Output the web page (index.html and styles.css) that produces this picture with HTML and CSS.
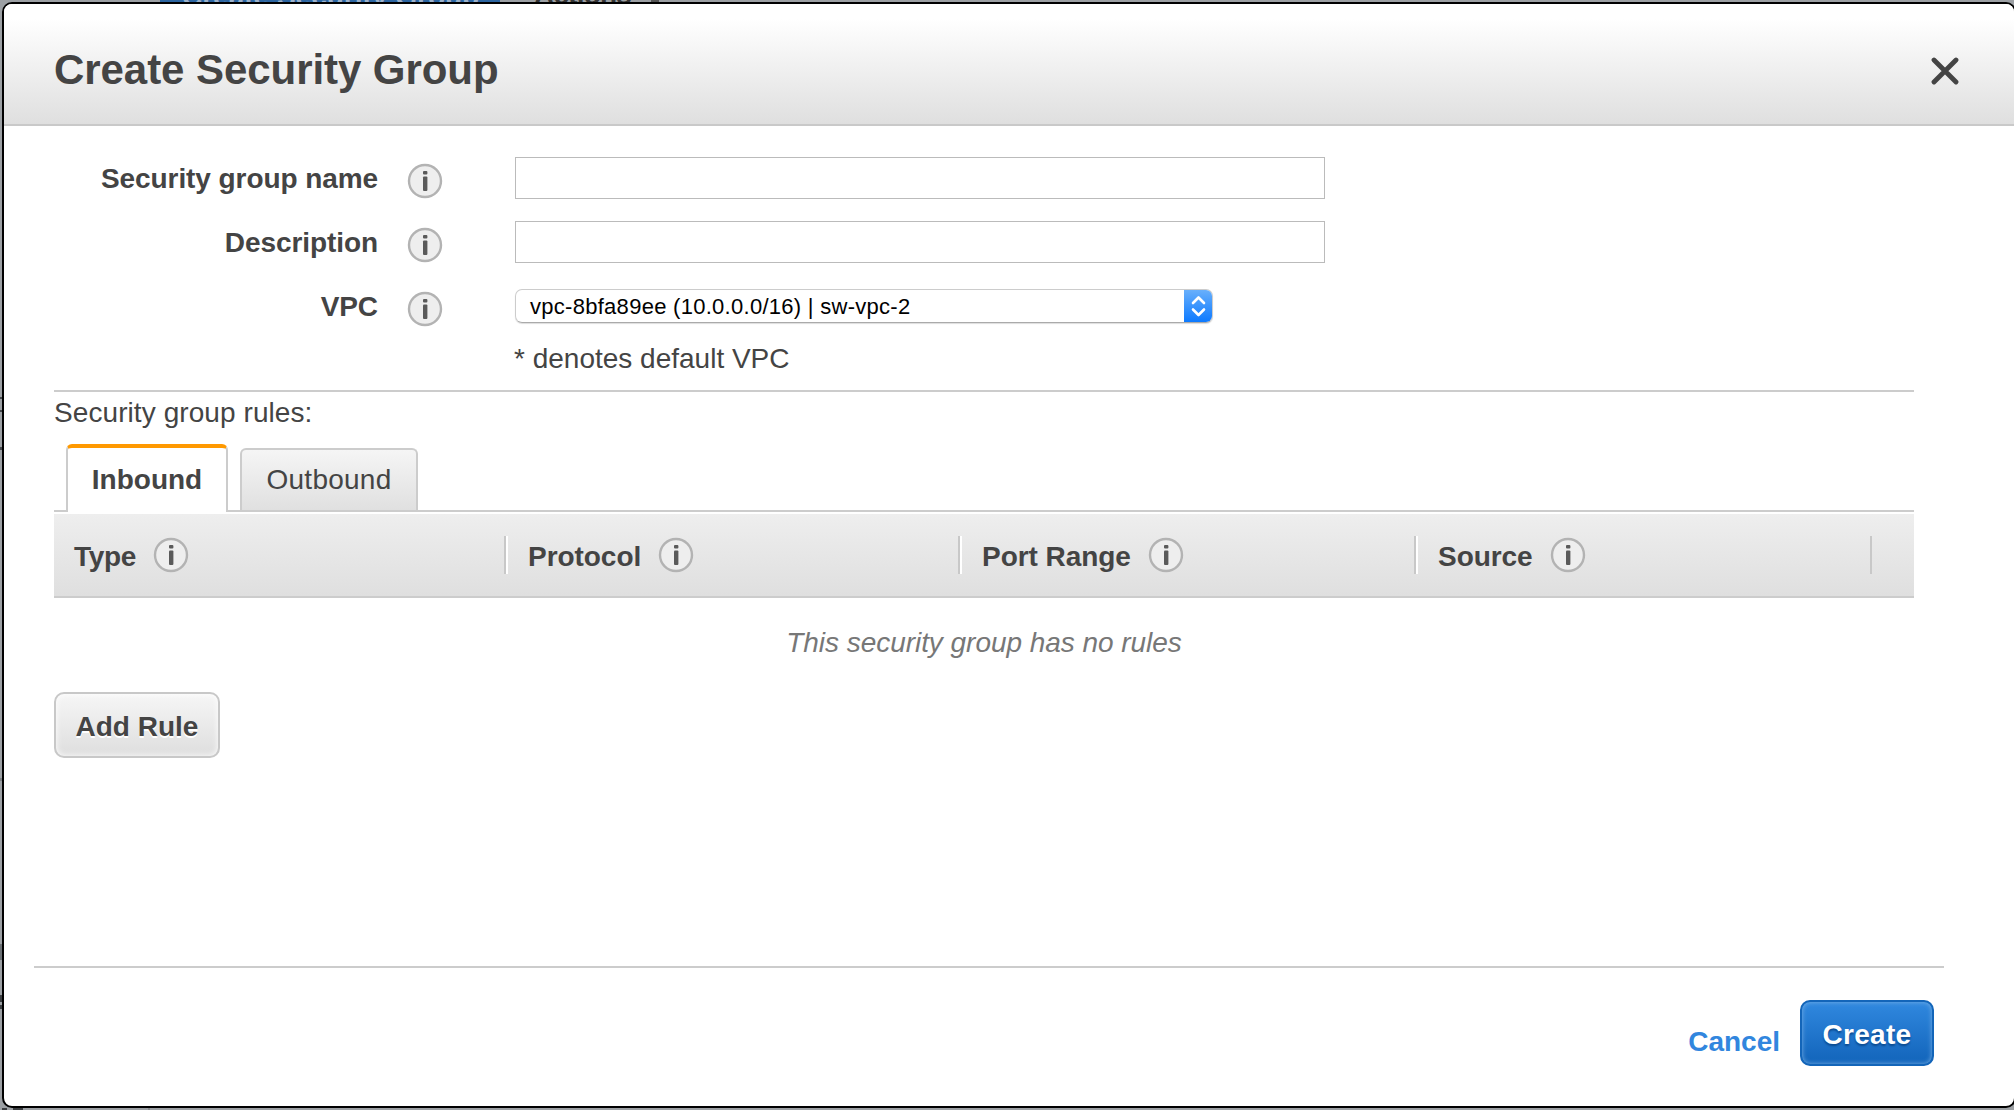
FILE: index.html
```html
<!DOCTYPE html>
<html lang="en">
<head>
<meta charset="utf-8">
<title>Create Security Group</title>
<link rel="stylesheet" href="styles.css">
</head>
<body>
<svg class="defs" width="0" height="0" aria-hidden="true">
  <symbol id="info" viewBox="0 0 36 36">
    <circle cx="18" cy="18" r="16" fill="#eee" stroke="#b3b3b3" stroke-width="2.4"/>
    <rect x="16" y="8" width="4.4" height="3.6" rx="1" fill="#5a5a5a"/>
    <rect x="16" y="13.4" width="4.4" height="14.6" rx="1" fill="#5a5a5a"/>
  </symbol>
</svg>
<div class="backdrop" aria-hidden="true">
  <div class="backdrop-gap"></div>
  <div class="backdrop-create"><span class="backdrop-label">Create Security Group</span></div>
  <div class="backdrop-actions"><span class="backdrop-label">Actions</span></div>
  <div class="backdrop-caret"></div>
</div>
<main class="modal">
  <header class="modal-header">
    <h1 class="title">Create Security Group</h1>
    <svg class="close" width="28" height="28" viewBox="0 0 28 28"><path d="M3 3L25 25M25 3L3 25" stroke="#444" stroke-width="4.8" stroke-linecap="round"/></svg>
  </header>
  <form class="form">
    <div class="row">
      <label class="label" for="group-name">Security group name</label>
      <svg class="info"><use href="#info"/></svg>
      <input class="field" id="group-name" type="text">
    </div>
    <div class="row">
      <label class="label" for="description">Description</label>
      <svg class="info"><use href="#info"/></svg>
      <input class="field" id="description" type="text">
    </div>
    <div class="row">
      <label class="label">VPC</label>
      <svg class="info"><use href="#info"/></svg>
      <div class="select">
        <span class="select-text">vpc-8bfa89ee (10.0.0.0/16) | sw-vpc-2</span>
        <span class="select-arrows"><svg width="29" height="34" viewBox="0 0 29 34"><path d="M9 14L14.5 8.5L20 14M9 20.5L14.5 26L20 20.5" fill="none" stroke="#fff" stroke-width="2.6" stroke-linecap="round" stroke-linejoin="round"/></svg></span>
      </div>
    </div>
    <p class="hint">* denotes default VPC</p>
  </form>
  <section class="rules">
    <p class="rules-title">Security group rules:</p>
    <div class="tabs">
      <div class="tab tab-active">Inbound</div>
      <div class="tab tab-idle">Outbound</div>
    </div>
    <div class="thead">
      <div class="th th-type"><span class="th-text">Type</span><svg class="info"><use href="#info"/></svg></div>
      <div class="th th-protocol"><span class="th-text">Protocol</span><svg class="info"><use href="#info"/></svg></div>
      <div class="th th-port"><span class="th-text">Port Range</span><svg class="info"><use href="#info"/></svg></div>
      <div class="th th-source"><span class="th-text">Source</span><svg class="info"><use href="#info"/></svg></div>
    </div>
    <p class="empty">This security group has no rules</p>
    <button class="btn btn-add" type="button">Add Rule</button>
  </section>
  <footer class="footer">
    <a class="cancel">Cancel</a>
    <button class="btn btn-create" type="button">Create</button>
  </footer>
</main>
</body>
</html>
```
FILE: styles.css
```css
* { box-sizing: border-box; }
body {
  margin: 0;
  width: 2014px;
  height: 1110px;
  overflow: hidden;
  position: relative;
  /* slivers of the dimmed page left of and below the dialog */
  background:
    linear-gradient(#45484c, #45484c) 0 397px / 2px 2px no-repeat,
    linear-gradient(#45484c, #45484c) 0 410px / 2px 2px no-repeat,
    linear-gradient(#45484c, #45484c) 0 447px / 2px 3px no-repeat,
    linear-gradient(#7c8084, #7c8084) 0 778px / 2px 3px no-repeat,
    linear-gradient(#6b7074, #6b7074) 0 944px / 2px 16px no-repeat,
    linear-gradient(#3c3f42, #3c3f42) 0 995px / 2px 7px no-repeat,
    linear-gradient(#3c3f42, #3c3f42) 0 1005px / 2px 4px no-repeat,
    linear-gradient(#3c3f42, #3c3f42) 2px 1108px / 5px 2px no-repeat,
    linear-gradient(#3c3f42, #3c3f42) 13px 1108px / 10px 2px no-repeat,
    linear-gradient(#85898d, #85898d) 148px 1108px / 2px 2px no-repeat,
    #9ca0a4;
  color: #444;
  font: 28px/32px "Liberation Sans", Arial, sans-serif;
}
p, h1 { margin: 0; }
.defs { position: absolute; }
.backdrop { display: flex; height: 2px; overflow: hidden; }
.backdrop-gap { width: 160px; }
.backdrop-create { width: 340px; height: 2px; background: #2d65a0; color: #9db3cc; padding-left: 22px; }
.backdrop-actions { margin-left: 34px; color: #333; }
.backdrop-label { display: block; margin-top: -21px; font-weight: bold; white-space: nowrap; }
.backdrop-create .backdrop-label { margin-top: -19px; }
.backdrop-actions .backdrop-label { letter-spacing: -0.8px; }
.backdrop-caret { width: 8px; height: 2px; margin-left: 20px; background: #555; }
.modal {
  display: flex;
  flex-direction: column;
  position: relative;
  width: 2014px;
  height: 1106px;
  margin-left: 2px;
  border: 2px solid #000;
  border-radius: 10px;
  background: #fff;
  overflow: hidden;
}
.modal-header {
  display: flex;
  align-items: center;
  justify-content: space-between;
  height: 122px;
  flex: none;
  padding: 0 55px 0 50px;
  border-bottom: 2px solid #c9c9c9;
  background: linear-gradient(#fff 12%, #dfdfdf);
}
.title { padding-top: 12px; font-size: 42px; line-height: 48px; letter-spacing: -0.06px; }
.close { margin-top: 13px; }
.form { padding: 31px 0 0; }
.row { display: flex; height: 64px; }
.label { width: 374px; font-weight: bold; text-align: right; line-height: 44px; letter-spacing: -0.08px; }
.info { width: 36px; height: 36px; flex: none; }
.row .info { margin: 6px 72px 0 29px; }
.field { width: 810px; height: 42px; border: 1px solid #bbb; background: #fff; padding: 0; }
.select {
  display: flex;
  width: 698px;
  height: 34px;
  margin-top: 4px;
  border: 1px solid #ccc;
  border-bottom-color: #aaa;
  border-radius: 7px;
  overflow: hidden;
  box-shadow: 0 1px 1px #ddd;
}
.select-text { flex: 1; padding-left: 14px; font-size: 22px; line-height: 34px; letter-spacing: 0.28px; color: #000; }
.select-arrows { width: 29px; margin: -1px -1px -1px 0; background: linear-gradient(#6bb1fb, #0a78ff); }
.select-arrows svg { display: block; }
.hint { padding-left: 510px; height: 41px; line-height: 20px; }
.rules { width: 1860px; margin-left: 50px; border-top: 2px solid #ccc; }
.rules-title { height: 52px; line-height: 42px; letter-spacing: 0.08px; }
.tabs { display: flex; align-items: flex-end; height: 68px; padding-left: 12px; gap: 12px; border-bottom: 2px solid #ccc; }
.tab { display: flex; justify-content: center; border: 2px solid #ccc; border-bottom: 0; border-radius: 6px 6px 0 0; }
.tab-active { width: 162px; height: 68px; margin-bottom: -2px; border-top: 4px solid #ff9900; background: #fff; font-weight: bold; padding-top: 16px; }
.tab-idle { width: 178px; height: 62px; background: linear-gradient(#f5f5f5, #e0e0e0); padding-top: 14px; letter-spacing: 0.25px; }
.thead { display: flex; align-items: center; height: 84px; margin-top: 2px; border-bottom: 2px solid #ccc; background: linear-gradient(#eee, #dfdfdf); font-weight: bold; }
.th { display: flex; align-items: center; gap: 17px; height: 38px; padding-left: 22px; border-right: 2px solid #c8c8c8; box-shadow: 2px 0 0 #fff; }
.th-text { padding-top: 3px; letter-spacing: -0.05px; }
.th-type { width: 452px; padding-left: 20px; }
.th-type .th-text { letter-spacing: -0.3px; }
.th-protocol { width: 454px; }
.th-port { width: 456px; }
.th-source { width: 456px; box-shadow: none; }
.empty { height: 94px; padding-top: 29px; text-align: center; font-style: italic; letter-spacing: -0.04px; color: #777; }
.btn { display: block; height: 66px; padding: 3px 0 0; border-radius: 10px; font: bold 28px/32px "Liberation Sans", Arial, sans-serif; }
.btn-add { width: 166px; border: 2px solid #c8c8c8; color: #444; background: linear-gradient(#f6f6f6, #dedede); box-shadow: inset 0 0 6px #fff; text-shadow: 0 2px 0 #fff; }
.footer { display: flex; justify-content: flex-end; width: 1910px; height: 140px; margin: auto 0 0 30px; padding: 32px 10px 0 0; gap: 20px; border-top: 2px solid #ccc; }
.cancel { color: #3186de; font-weight: bold; padding-top: 26px; }
.btn-create { width: 134px; border: 2px solid #1365b9; color: #fff; letter-spacing: 0.3px; background: linear-gradient(#3088df, #1264ba); box-shadow: inset 0 0 5px #78b0e4; text-shadow: 0 2px 2px #0b4a90; }
```
